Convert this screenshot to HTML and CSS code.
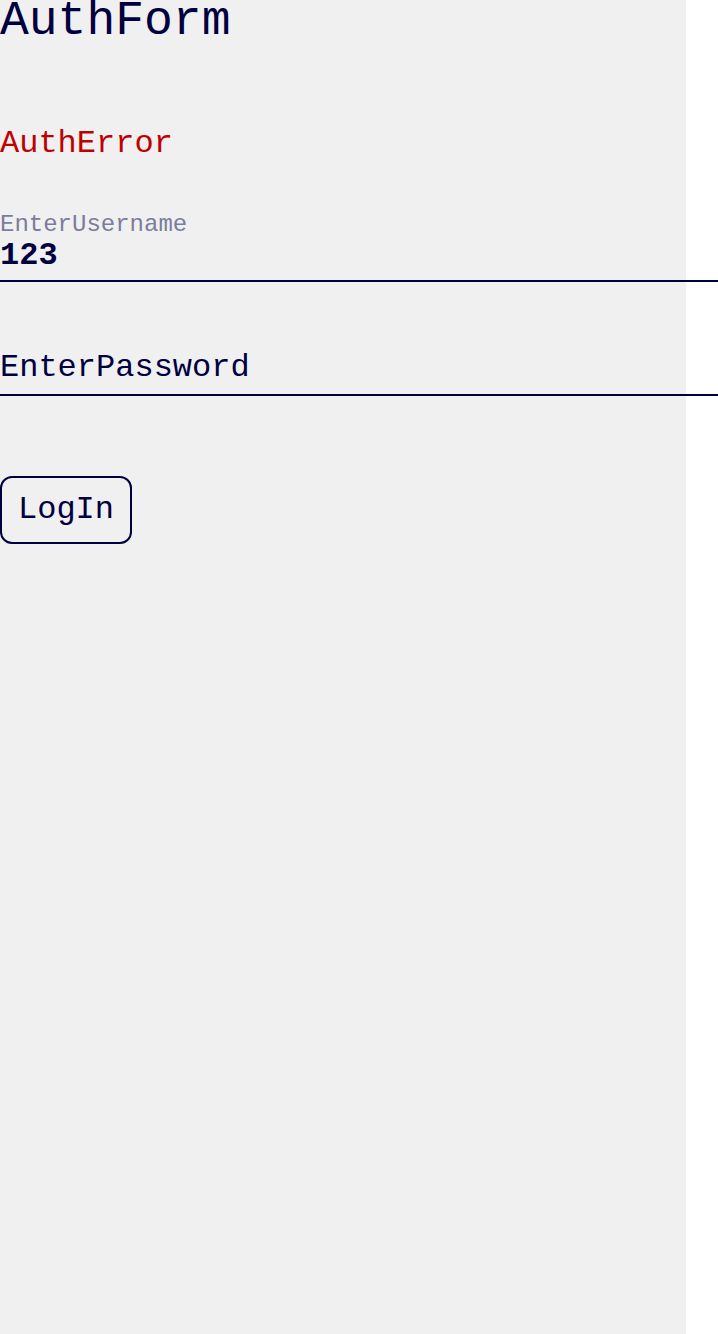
FILE: index.html
```html
<!DOCTYPE html>
<html>
<head>
<meta charset="utf-8">
<link rel="stylesheet" href="styles.css">
</head>
<body>
<div class="page">
  <h1 class="title">AuthForm</h1>
  <p class="error">AuthError</p>
  <div class="field field-filled">
    <span class="label">EnterUsername</span>
    <span class="value">123</span>
  </div>
  <div class="field field-empty">
    <span class="placeholder">EnterPassword</span>
  </div>
  <button class="btn">LogIn</button>
</div>
</body>
</html>
```
FILE: styles.css
```css
html, body {
  margin: 0;
  padding: 0;
  background: #ffffff;
}
.page {
  width: 686px;
  min-height: 1334px;
  background: #f0f0f0;
  font-family: "Liberation Mono", "Cousine", monospace;
  color: #000040;
  display: flex;
  flex-direction: column;
  align-items: flex-start;
}
.title {
  margin: 0;
  font-size: 48px;
  font-weight: normal;
  line-height: 42px;
}
.error {
  margin: 84px 0 0;
  font-size: 32px;
  line-height: 36px;
  color: #c00000;
}
.field {
  width: 718px;
  border-bottom: 2px solid #000040;
  display: flex;
  flex-direction: column;
  flex-shrink: 0;
}
.field-filled {
  margin-top: 49px;
  padding-bottom: 7px;
}
.label {
  font-size: 24px;
  line-height: 27px;
  color: #7c7c9c;
}
.value {
  font-size: 32px;
  line-height: 35px;
  font-weight: bold;
}
.field-empty {
  margin-top: 68px;
  padding-bottom: 8px;
}
.placeholder {
  font-size: 32px;
  line-height: 36px;
}
.btn {
  margin-top: 80px;
  font-family: inherit;
  font-size: 32px;
  line-height: 36px;
  color: #000040;
  background: transparent;
  border: 2px solid #000040;
  border-radius: 12px;
  padding: 14px 16px;
}
```
